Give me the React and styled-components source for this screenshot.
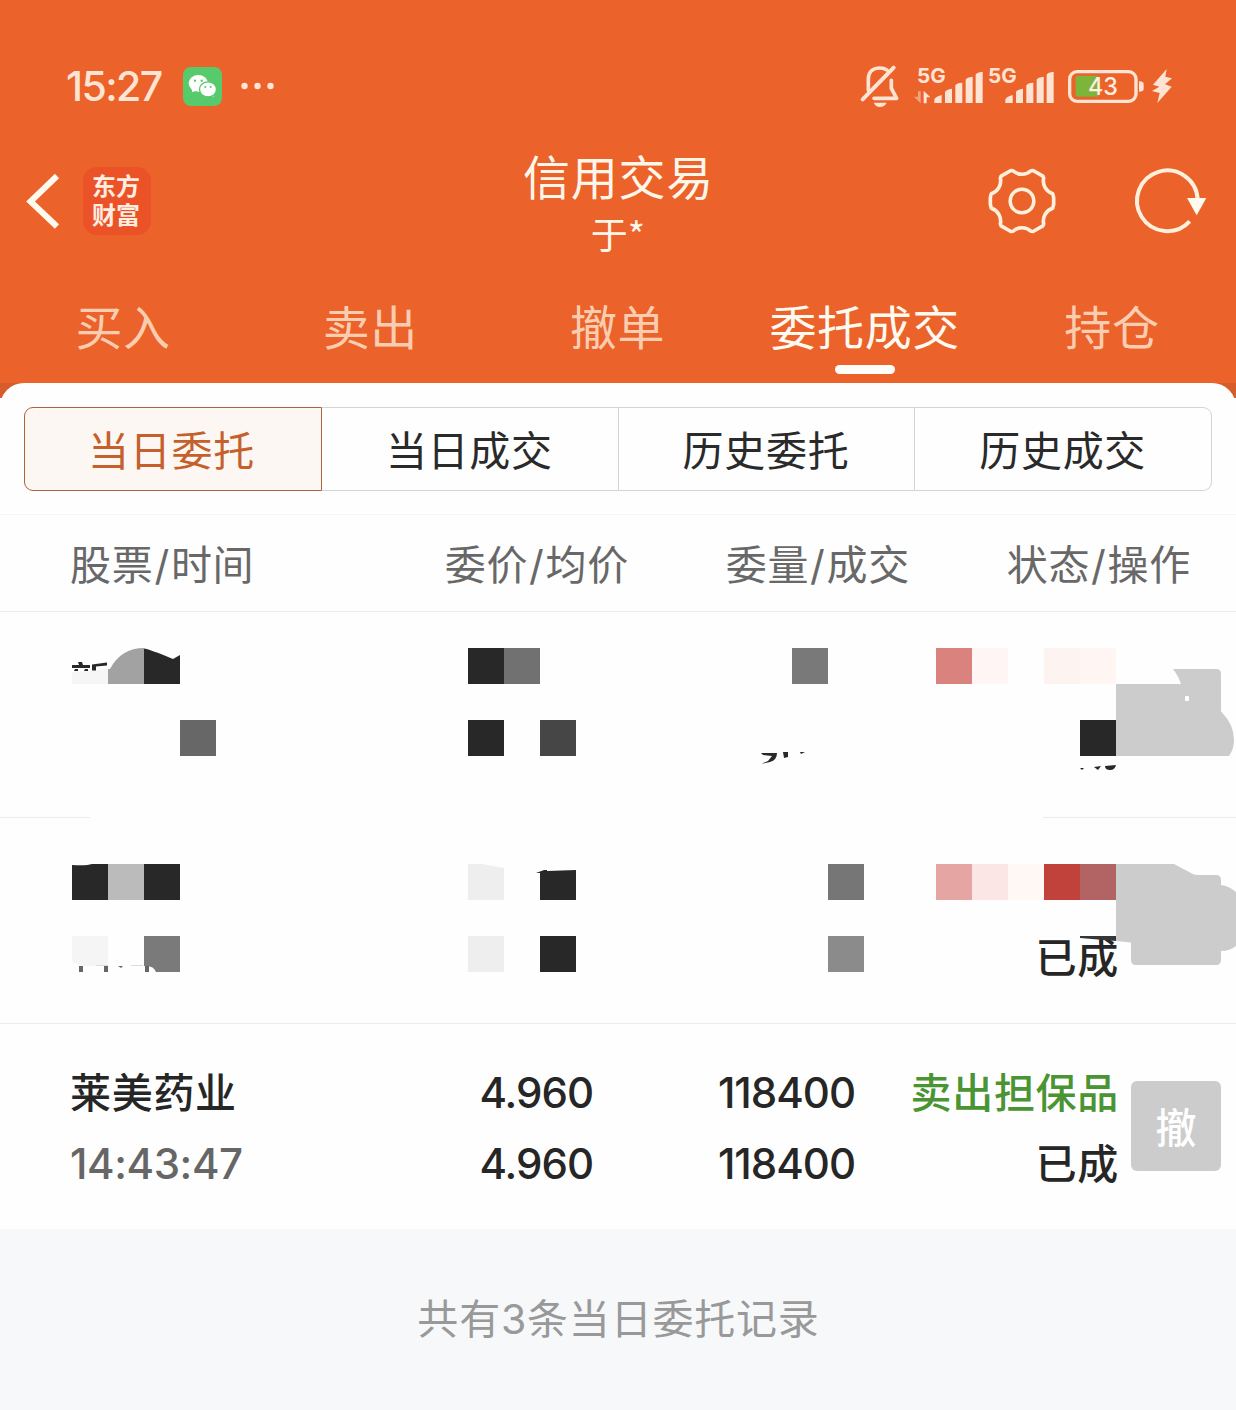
import styled, { createGlobalStyle } from "styled-components";

const GlobalStyle = createGlobalStyle`
  * {
    box-sizing: border-box;
  }
  body {
    margin: 0;
    background: #f7f8fa;
    font-family: Inter, "Noto Sans CJK SC", sans-serif;
  }
`;

const Page = styled.div`
  width: 1236px;
  height: 1410px;
  overflow: hidden;
  display: flex;
  flex-direction: column;
  background: #f7f8fa;
`;

const Header = styled.header`
  height: 383px;
  background: #eb622b;
  color: #fff6ea;
`;

const StatusBar = styled.div`
  height: 122px;
  padding: 50px 64px 0 66px;
  display: flex;
  align-items: center;
  justify-content: space-between;
  color: #ffe4d3;
`;
const StatusGroup = styled.div`
  display: flex;
  align-items: center;
`;
const Clock = styled.div`
  width: 117px;
  font-size: 41px;
  font-weight: 500;
  line-height: 48px;
  letter-spacing: -1.6px;
`;
const Glyph = styled.svg`
  display: block;
  flex: none;
  overflow: visible;
  margin-left: ${(props) => props.$gap || 0}px;
`;

const NavBar = styled.div`
  height: 158px;
  display: grid;
  grid-template-columns: 400px 1fr 400px;
  align-items: center;
`;
const NavLeft = styled.div`
  display: flex;
  align-items: center;
  padding-left: 25px;
`;
const NavRight = styled.div`
  display: flex;
  align-items: center;
  justify-content: flex-end;
  padding-right: 29px;
`;
const Logo = styled.div`
  width: 68px;
  height: 68px;
  margin-left: 20px;
  padding: 5px 2px 0 0;
  border-radius: 14px;
  background: #eb5228;
  color: #ffeee0;
  font-size: 24px;
  font-weight: 700;
  line-height: 29px;
  text-align: center;
`;
const Titles = styled.div`
  display: flex;
  flex-direction: column;
  align-items: center;
  padding-top: 8px;
`;
const Title = styled.h1`
  margin: 0;
  padding-left: 1px;
  font-size: 47px;
  font-weight: 400;
  line-height: 62px;
  letter-spacing: 0.8px;
`;
const Account = styled.div`
  font-size: 37px;
  line-height: 54px;
`;
const Star = styled.span`
  font-family: "Noto Sans CJK SC", sans-serif;
  font-size: 37px;
  line-height: 0;
`;

const Tabs = styled.nav`
  display: grid;
  grid-template-columns: repeat(5, 1fr);
  height: 103px;
`;
const Tab = styled.div`
  display: flex;
  flex-direction: column;
  align-items: center;
  justify-content: space-between;
  padding: 16px 1px 9px 0;
  font-size: 47px;
  line-height: 64px;
  letter-spacing: 0.6px;
  color: ${(props) => (props.$active ? "#fffaf0" : "#fbcdb0")};
`;
const TabBar = styled.div`
  width: 60px;
  height: 9px;
  border-radius: 5px;
  background: #fffdf8;
`;

const SheetBack = styled.div`
  background: linear-gradient(#d65c2b 15px, #fefefe 15px);
`;
const Sheet = styled.main`
  border-radius: 24px 24px 0 0;
  background: #fefefe;
`;
const Segments = styled.div`
  display: grid;
  grid-template-columns: 298px repeat(3, 1fr);
  height: 132px;
  padding: 24px 24px 23px;
  border-bottom: 1px solid #f5f5f5;
`;
const Segment = styled.div`
  display: flex;
  align-items: center;
  justify-content: center;
  padding-right: 1px;
  padding-bottom: 2px;
  font-size: 41px;
  letter-spacing: 0.7px;
  color: ${(props) => (props.$active ? "#c5602c" : "#2a2a2a")};
  background: ${(props) => (props.$active ? "#fcf7f2" : "#fefefe")};
  border: solid ${(props) => (props.$active ? "#b0623c" : "#d4d4d4")};
  border-width: ${(props) => (props.$active ? "1px" : "1px 1px 1px 0")};
  &:first-child {
    padding-right: 3px;
    border-radius: 9px 0 0 9px;
  }
  &:last-child {
    border-radius: 0 9px 9px 0;
  }
`;

const Columns = styled.div`
  display: grid;
  grid-template-columns: 1fr 281px 281px 281px;
  align-items: center;
  height: 97px;
  padding: 0 45px 2px 70px;
  border-bottom: 1px solid #ececec;
  font-size: 41px;
  letter-spacing: 0.7px;
  color: #686868;
`;
const Column = styled.div`
  text-align: ${(props) => (props.$left ? "left" : "right")};
  white-space: nowrap;
`;
const Slash = styled.span`
  padding: 0 1px;
`;

const Row = styled.div`
  position: relative;
  display: grid;
  grid-template-columns: 1fr 262px 262px 262px 102px;
  height: ${(props) => (props.$last ? "205px" : "206px")};
  padding: 34px 15px 0 70px;
  border-bottom: ${(props) => (props.$last ? "none" : "1px solid #ececec")};
  color: #262626;
`;
const Cell = styled.div`
  display: grid;
  grid-template-rows: 71px 71px;
  height: 142px;
  text-align: ${(props) => (props.$left ? "left" : "right")};
  font-size: 41px;
  font-weight: 500;
  line-height: 71px;
  letter-spacing: 0.7px;
  white-space: nowrap;
`;
const ActionCell = styled.div`
  display: flex;
  justify-content: flex-end;
  padding-top: 23px;
`;
const Num = styled.span`
  color: ${(props) => (props.$time ? "#666" : "#262626")};
  font-size: 42px;
  line-height: 69px;
  letter-spacing: ${(props) => (props.$time ? "-0.4px" : "-1px")};
  padding-right: 2px;
`;
const Side = styled.span`
  color: #4a9433;
`;
const Cancel = styled.button`
  width: 90px;
  height: 90px;
  padding: 0 0 2px;
  border: 0;
  border-radius: 6px;
  background: #ccc;
  color: #fefefe;
  font-family: inherit;
  font-size: 41px;
  font-weight: 500;
`;
const Mask = styled.svg`
  position: absolute;
  left: 0;
  top: 0;
  display: block;
`;

const Summary = styled.footer`
  padding-top: 60px;
  padding-left: 1px;
  text-align: center;
  font-size: 41px;
  line-height: 60px;
  letter-spacing: 0.8px;
  color: #999;
`;

const TABS = ["买入", "卖出", "撤单", "委托成交", "持仓"];
const SEGMENTS = ["当日委托", "当日成交", "历史委托", "历史成交"];
const COLUMNS = [
  ["股票", "时间"],
  ["委价", "均价"],
  ["委量", "成交"],
  ["状态", "操作"],
];

// [x, y, colour] of each 36px mosaic tile, y from the top of the row
const TILES_ONE = [
  [468, 36, "#282828"],
  [504, 36, "#717171"],
  [792, 36, "#797979"],
  [936, 36, "#d9827e"],
  [972, 36, "#fff5f4"],
  [1044, 36, "#fdf4f2"],
  [1080, 36, "#fff5f3"],
  [180, 108, "#676767"],
  [468, 108, "#282828"],
  [540, 108, "#464646"],
  [1080, 108, "#282828"],
];
const TILES_TWO = [
  [72, 46, "#282828"],
  [108, 46, "#bbb"],
  [144, 46, "#282828"],
  [828, 46, "#767676"],
  [936, 46, "#e4a5a3"],
  [972, 46, "#fbe6e5"],
  [1008, 46, "#fff8f5"],
  [1044, 46, "#c0423a"],
  [1080, 46, "#b16463"],
  [468, 118, "#eee"],
  [540, 118, "#282828"],
  [828, 118, "#8b8b8b"],
];

function Tiles({ data }) {
  return data.map(([x, y, fill]) => (
    <rect key={`${x}-${y}`} x={x} y={y} width="36" height="36" fill={fill} />
  ));
}

function WechatIcon() {
  return (
    <Glyph width="39" height="39" viewBox="0 0 117 117">
      <rect width="117" height="117" rx="24" fill="#57cb6c" />
      <path d="M26 64l2 12 13-6z" fill="#fff" />
      <ellipse cx="46" cy="49" rx="29" ry="25" fill="#fff" />
      <path d="M84 82l8 9 -1-14z" fill="#fff" />
      <ellipse cx="75" cy="67" rx="25.5" ry="22.5" fill="#fff" stroke="#57cb6c" strokeWidth="4" />
      <circle cx="36" cy="41" r="3.5" fill="#57cb6c" />
      <circle cx="56" cy="41" r="3.5" fill="#57cb6c" />
      <circle cx="67" cy="60" r="3" fill="#57cb6c" />
      <circle cx="83" cy="60" r="3" fill="#57cb6c" />
    </Glyph>
  );
}

function BellOffIcon() {
  return (
    <Glyph width="39" height="43" viewBox="0 0 117 129" fill="none" stroke="#ffe4d3">
      <path
        d="M25 76 V42 C25 20 40 9 60 9 C68 9 75 11 81 15 M94 46 V70 L110 100 H42"
        strokeWidth="11"
        strokeLinejoin="round"
        strokeLinecap="round"
      />
      <path d="M8 103 L101 8" strokeWidth="12" strokeLinecap="round" />
      <path d="M41 113 H80 C76 121 69 126 60 126 S45 121 41 113Z" fill="#ffe4d3" stroke="none" />
    </Glyph>
  );
}

function SignalIcon({ gap, arrows }) {
  const left = arrows ? 0 : -12;
  const right = arrows ? 206 : 194;
  return (
    <Glyph
      $gap={gap}
      width={right / 3}
      height="36"
      viewBox={`0 0 ${right} 108`}
      fill="#ffe4d3"
    >
      <text
        x={left + 9}
        y="46"
        fontFamily="Inter, sans-serif"
        fontWeight="700"
        fontSize="61"
        textLength="86"
        lengthAdjust="spacingAndGlyphs"
      >
        5G
      </text>
      {arrows && (
        <>
          <path d="M12 70h8v36l-20-20h12z" opacity="0.5" />
          <path d="M29 106V68l20 20h-11v18z" />
        </>
      )}
      <path d={`M${left + 61} 105v-10q2-9 22-14v24z`} />
      <path d={`M${left + 93} 105V72q3-7 21-10v43z`} />
      <path d={`M${left + 124} 105V52q3-7 21-8v61z`} />
      <path d={`M${left + 155} 105V35q3-7 21-9v79z`} />
      <path d={`M${left + 185} 105V20q3-7 21-9v94z`} />
    </Glyph>
  );
}

function BatteryIcon() {
  return (
    <Glyph $gap={14} width="76" height="33" viewBox="0 0 228 99">
      <rect x="5" y="5" width="199" height="89" rx="22" fill="none" stroke="#ffe4d3" strokeWidth="10" />
      <path d="M23 24q0-7 7-7h59v63h-59q-7 0-7-7z" fill="#7cb53a" />
      <path d="M213 34q14 0 14 8v15q0 8-14 8z" fill="#ffe4d3" />
      <text
        x="60"
        y="76"
        fontFamily="Inter, sans-serif"
        fontWeight="500"
        fontSize="74"
        textLength="90"
        lengthAdjust="spacingAndGlyphs"
        fill="#fff0e0"
      >
        43
      </text>
    </Glyph>
  );
}

function BoltIcon() {
  return (
    <Glyph $gap={8} width="20" height="34" viewBox="0 0 60 102">
      <path d="M44 0L3 47l19 6L0 66l23 6-7 30 43-49-20-7 21-18-20-5z" fill="#ffe4d3" />
    </Glyph>
  );
}

function GearIcon() {
  return (
    <Glyph width="68" height="66" viewBox="-102 -99 204 198" fill="none" stroke="#fff0dc">
      <path
        d="M92 22L95 10V-10L92 -22A40 40 0 0 1 65 -68.700L62.700 -74.600L33.300 -91.600L27 -90.700A40 40 0 0 1 -27 -90.700L-33.300 -91.600L-62.700 -74.600L-65 -68.700A40 40 0 0 1 -92 -22L-95 -10V10L-92 22A40 40 0 0 1 -65 68.700L-62.700 74.600L-33.300 91.600L-27 90.700A40 40 0 0 1 27 90.700L33.300 91.600L62.700 74.600L65 68.700A40 40 0 0 1 92 22Z"
        strokeWidth="11"
        strokeLinejoin="round"
      />
      <circle r="35.500" strokeWidth="10.500" />
    </Glyph>
  );
}

function RefreshIcon() {
  return (
    <Glyph $gap={79} width="72" height="66" viewBox="-97 -99 216 198">
      <path d="M67 61A91 91 0 1 1 91 -4" fill="none" stroke="#fff0dc" strokeWidth="12" />
      <path d="M59 -9H117L88 43Z" fill="#fffaf0" />
    </Glyph>
  );
}

function FirstMask() {
  return (
    <Mask width="1236" height="206" viewBox="0 0 1236 206">
      <rect x="90" y="204" width="953" height="2" fill="#fefefe" />
      <Tiles data={TILES_ONE} />
      <path d="M72 60L108 57V72H72Z" fill="#f6f6f6" />
      <path d="M108 57H110Q121 36 144 36V72H108Z" fill="#a2a2a2" />
      <path d="M144 36.500Q149 37 173 47L180 43V72H144Z" fill="#282828" />
      <path
        d="M72 53h7l-1-3h4l1 3h7v3H72zM75 57h3v2h-4zM85 57h3v2h-4zM92 52.500l15-2v3l-11 1v4h-4z"
        fill="#282828"
      />
      <path d="M761 141h16q0 7-7 9l-9 2 7-3 4-5-9-1zM783 140h5v5l-4 1zM800 140h5l-4 2z" fill="#282828" />
      <path
        d="M1116 72H1181Q1179 65 1173 57H1216Q1221 57 1221 62V99.500Q1234 112 1234 128Q1234 137 1229 144H1116Z"
        fill="#ccc"
      />
      <rect x="1185" y="84" width="4" height="5" rx="1" fill="#fff" />
      <path d="M1080 156h4l-2 2zM1094 155l7-1-3 4zM1105 154l11-1q-1 5-6 5t-5-4z" fill="#282828" />
    </Mask>
  );
}

function SecondMask() {
  return (
    <Mask width="1236" height="206" viewBox="0 0 1236 206">
      <Tiles data={TILES_TWO} />
      <path d="M72 46H92Q86 48 72 47Z" fill="#fefefe" />
      <path d="M468 46H482L504 50V82H468Z" fill="#eee" />
      <path d="M536 55l8-3h3v1l29-1v30h-36V55z" fill="#282828" />
      <path d="M72 118h36v30H82l-10-4z" fill="#f5f5f5" />
      <path d="M144 118h36v36h-24q-2-6-10-6h-2z" fill="#7a7a7a" />
      <path d="M79 148h4v6h-4zM104 148h4v6h-4zM145 148h4v6h-4zM118 148h5l-2 2z" fill="#666" />
      <path d="M96 147.500h12M131 147.500h12" stroke="#ddd" />
      <path d="M1080 118H1116V123L1080 120Z" fill="#363636" />
      <path
        d="M1116 46H1174L1190 54.500Q1194 57 1198 57H1216Q1221 57 1221 62V67Q1229 68 1236 74V128Q1230 133 1221 133V142Q1221 147 1216 147H1136Q1131 147 1131 142V124.500L1116 123Z"
        fill="#ccc"
      />
    </Mask>
  );
}

export default function App() {
  return (
    <Page>
      <GlobalStyle />
      <Header>
        <StatusBar>
          <StatusGroup>
            <Clock>15:27</Clock>
            <WechatIcon />
            <Glyph $gap={19} width="34" height="8" viewBox="0 0 34 8" fill="#ffe4d3">
              <circle cx="3.500" cy="4" r="3.200" />
              <circle cx="16.500" cy="4" r="3.200" />
              <circle cx="29.500" cy="4" r="3.200" />
            </Glyph>
          </StatusGroup>
          <StatusGroup>
            <BellOffIcon />
            <SignalIcon gap={15} arrows />
            <SignalIcon gap={7} />
            <BatteryIcon />
            <BoltIcon />
          </StatusGroup>
        </StatusBar>
        <NavBar>
          <NavLeft>
            <Glyph width="38" height="58" viewBox="0 0 38 58" fill="none" stroke="#fffaf0">
              <path d="M32 4L5.500 29.500L32 54.500" strokeWidth="6" />
            </Glyph>
            <Logo>
              东方
              <br />
              财富
            </Logo>
          </NavLeft>
          <Titles>
            <Title>信用交易</Title>
            <Account>
              于<Star>*</Star>
            </Account>
          </Titles>
          <NavRight>
            <GearIcon />
            <RefreshIcon />
          </NavRight>
        </NavBar>
        <Tabs>
          {TABS.map((name) => (
            <Tab key={name} $active={name === "委托成交"}>
              {name}
              {name === "委托成交" && <TabBar />}
            </Tab>
          ))}
        </Tabs>
      </Header>

      <SheetBack>
        <Sheet>
          <Segments>
            {SEGMENTS.map((name, i) => (
              <Segment key={name} $active={i === 0}>
                {name}
              </Segment>
            ))}
          </Segments>
          <Columns>
            {COLUMNS.map(([top, bottom], i) => (
              <Column key={top} $left={i === 0}>
                {top}
                <Slash>/</Slash>
                {bottom}
              </Column>
            ))}
          </Columns>

          <Row>
            <FirstMask />
          </Row>
          <Row>
            <Cell $left />
            <Cell />
            <Cell />
            <Cell>
              <span />
              <span>已成</span>
            </Cell>
            <SecondMask />
          </Row>
          <Row $last>
            <Cell $left>
              <span>莱美药业</span>
              <Num $time>14:43:47</Num>
            </Cell>
            <Cell>
              <Num>4.960</Num>
              <Num>4.960</Num>
            </Cell>
            <Cell>
              <Num>118400</Num>
              <Num>118400</Num>
            </Cell>
            <Cell>
              <Side>卖出担保品</Side>
              <span>已成</span>
            </Cell>
            <ActionCell>
              <Cancel>撤</Cancel>
            </ActionCell>
          </Row>
        </Sheet>
      </SheetBack>
      <Summary>共有3条当日委托记录</Summary>
    </Page>
  );
}
